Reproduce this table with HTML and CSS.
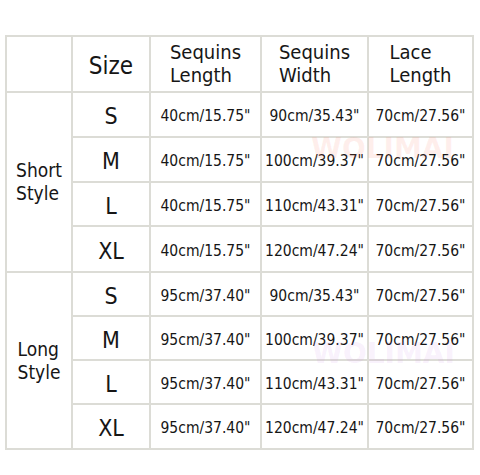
FILE: index.html
```html
<!DOCTYPE html>
<html lang="en">
<head>
<meta charset="utf-8">
<title>Size Chart</title>
<link rel="stylesheet" href="styles.css">
</head>
<body>
<div class="chart">
  <div class="mark mark-pink">WOLIMAI</div>
  <div class="mark mark-violet">WOLIMAI</div>
  <div class="grid">
    <div class="cell"></div>
    <div class="cell size-head">Size</div>
    <div class="cell head"><span>Sequins<br>Length</span></div>
    <div class="cell head"><span>Sequins<br>Width</span></div>
    <div class="cell head"><span>Lace<br>Length</span></div>

    <div class="cell style"><span>Short<br>Style</span></div>
    <div class="cell size">S</div>
    <div class="cell val">40cm/15.75"</div>
    <div class="cell val">90cm/35.43"</div>
    <div class="cell val">70cm/27.56"</div>
    <div class="cell size">M</div>
    <div class="cell val">40cm/15.75"</div>
    <div class="cell val">100cm/39.37"</div>
    <div class="cell val">70cm/27.56"</div>
    <div class="cell size">L</div>
    <div class="cell val">40cm/15.75"</div>
    <div class="cell val">110cm/43.31"</div>
    <div class="cell val">70cm/27.56"</div>
    <div class="cell size">XL</div>
    <div class="cell val">40cm/15.75"</div>
    <div class="cell val">120cm/47.24"</div>
    <div class="cell val">70cm/27.56"</div>

    <div class="cell style"><span>Long<br>Style</span></div>
    <div class="cell size">S</div>
    <div class="cell val">95cm/37.40"</div>
    <div class="cell val">90cm/35.43"</div>
    <div class="cell val">70cm/27.56"</div>
    <div class="cell size">M</div>
    <div class="cell val">95cm/37.40"</div>
    <div class="cell val">100cm/39.37"</div>
    <div class="cell val">70cm/27.56"</div>
    <div class="cell size">L</div>
    <div class="cell val">95cm/37.40"</div>
    <div class="cell val">110cm/43.31"</div>
    <div class="cell val">70cm/27.56"</div>
    <div class="cell size">XL</div>
    <div class="cell val">95cm/37.40"</div>
    <div class="cell val">120cm/47.24"</div>
    <div class="cell val">70cm/27.56"</div>
  </div>
</div>
</body>
</html>
```

FILE: styles.css
```css
html, body {
  margin: 0;
  padding: 0;
  background: #ffffff;
}

body {
  font-family: "DejaVu Sans Condensed", "DejaVu Sans", sans-serif;
  font-stretch: condensed;
  color: #161616;
}

.chart {
  position: relative;
  width: 469px;
  margin: 35px 0 0 5px;
}

.grid {
  display: grid;
  grid-template-columns: 64px 76px 109px 105px 103px;
  grid-template-rows: 54px 43px 43px 42px 44px 42px 42px 42px 43px;
  gap: 2px;
  padding: 2px;
  background: #dcdcd6;
}

.cell {
  background: #ffffff;
  display: flex;
  align-items: center;
  justify-content: center;
  white-space: nowrap;
}

.size-head {
  font-size: 24px;
  padding-top: 4px;
}

.head {
  font-size: 20px;
  line-height: 23px;
}

.head span {
  display: inline-block;
  text-align: left;
}

.style {
  grid-column: 1;
  grid-row: span 4;
  font-size: 19px;
  line-height: 23px;
}

.style span {
  display: inline-block;
  text-align: left;
}

.size {
  font-size: 23px;
  padding-top: 3px;
}

.val {
  font-size: 15.5px;
  padding-top: 3px;
}

.mark {
  position: absolute;
  z-index: 2;
  font-family: "DejaVu Sans", sans-serif;
  font-stretch: normal;
  font-weight: bold;
  font-size: 28px;
  line-height: 28px;
  pointer-events: none;
}

.mark-pink {
  left: 306px;
  top: 100px;
  color: rgba(250, 120, 100, 0.12);
}

.mark-violet {
  left: 307px;
  top: 305px;
  color: rgba(200, 120, 230, 0.11);
}
```
